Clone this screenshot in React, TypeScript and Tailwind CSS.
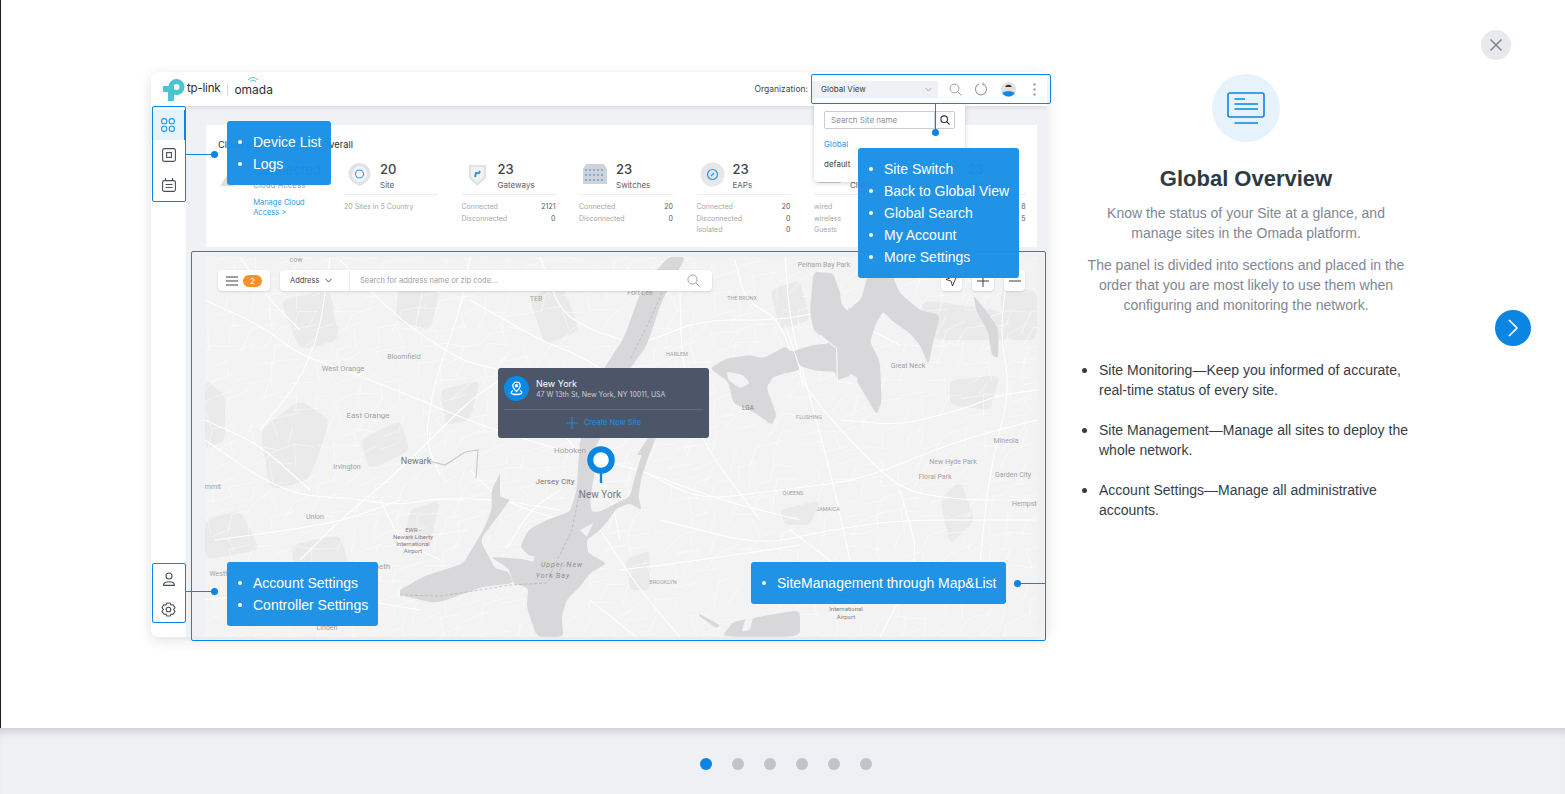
const stats = [
  { num: "20", label: "Site", icon: "site", rows: [["20 Sites in 5 Country", ""]] },
  { num: "23", label: "Gateways", icon: "gateway", rows: [["Connected", "2121"], ["Disconnected", "0"]] },
  { num: "23", label: "Switches", icon: "switch", rows: [["Connected", "20"], ["Disconnected", "0"]] },
  { num: "23", label: "EAPs", icon: "eap", rows: [["Connected", "20"], ["Disconnected", "0"], ["Isolated", "0"]] },
  { num: "23", label: "Clients", icon: "client", rows: [["wired", "20"], ["wireless", "20"], ["Guests", "20"]] },
  { num: "23", label: "Alerts", icon: "alert", rows: [["Error", "8"], ["Warning", "5"]] },
];

const labels: [string, number, number, number, string?][] = [
  ["cow", 296, 262, 7],
  ["TEB", 536, 301, 7],
  ["Fort Lee", 640, 295, 7],
  ["Bloomfield", 404, 359, 7],
  ["West Orange", 343, 371, 7.5],
  ["East Orange", 368, 418, 8],
  ["Irvington", 347, 469, 7],
  ["Newark", 416, 464, 9, "#77777a"],
  ["Union", 315, 519, 7],
  ["mmit", 213, 489, 7],
  ["Westfield", 224, 576, 7],
  ["Elizabeth", 374, 569, 8],
  ["Linden", 327, 630, 7],
  ["EWR -", 413, 532, 6, "#808083"],
  ["Newark Liberty", 413, 539, 6, "#808083"],
  ["International", 413, 546, 6, "#808083"],
  ["Airport", 413, 553, 6, "#808083"],
  ["Jersey City", 555, 484, 8, "#77777a"],
  ["Hoboken", 570, 453, 8],
  ["New York", 600, 498, 10, "#77777a"],
  ["BROOKLYN", 663, 584, 5.5],
  ["QUEENS", 793, 495, 5.5],
  ["JAMAICA", 828, 511, 5.5],
  ["New Hyde Park", 953, 464, 7],
  ["Floral Park", 935, 479, 7],
  ["Garden City", 1013, 477, 7],
  ["Hempstead", 1030, 506, 7],
  ["Great Neck", 908, 368, 7],
  ["FLUSHING", 809, 419, 5.5],
  ["LGA", 748, 410, 6.5, "#808083"],
  ["HARLEM", 677, 356, 5.5],
  ["THE BRONX", 742, 300, 5.5],
  ["Pelham Bay Park", 824, 267, 7],
  ["Mineola", 1006, 443, 7],
  ["Valley Stream", 930, 568, 7],
  ["JFK", 845, 598, 6, "#808083"],
  ["International", 846, 611, 6, "#808083"],
  ["Airport", 846, 619, 6, "#808083"],
];

const highways = [
  "M205 300 L260 325 L300 355 L350 372 L420 400 L480 425 L560 450 L640 470 L720 500 L800 520",
  "M205 420 L260 445 L310 490",
  "M205 440 L260 478 L300 495 L345 498 L400 505 L440 498 L500 500 L560 510",
  "M215 540 L290 530 L345 520 L400 500",
  "M300 560 L340 520 L400 470 L470 400 L500 380",
  "M340 260 L400 320 L460 360 L500 370",
  "M470 300 L540 340 L590 360 L640 400",
  "M470 257 L460 310 L435 380 L425 440 L440 475",
  "M540 257 L560 310 L590 330 L640 345 L700 320 L780 320 L830 310 L900 345",
  "M680 257 L680 300 L682 360 L700 440 L760 520",
  "M735 260 L745 300 L780 320 L800 380 L840 430 L900 490 L960 500 L1037 500",
  "M785 257 L790 320 L805 380 L830 470 L850 560",
  "M840 420 L900 425 L960 410 L1000 395 L1037 390",
  "M640 470 L700 500 L780 490 L860 480 L960 440 L1037 420",
  "M660 520 L760 545 L830 530 L900 520 L1037 520",
  "M600 530 L640 590 L680 637",
  "M620 570 L700 560 L800 545",
  "M530 400 L560 430 L610 490 L620 540",
  "M590 600 L640 640",
  "M790 530 L830 560 L870 600",
  "M470 470 L500 500 L560 520",
  "M240 257 L270 300 L300 330",
  "M500 560 L530 510 L560 490",
  "M330 257 L320 330 L300 380 L260 430",
  "M380 500 L400 540 L440 560",
  "M1010 257 L1000 330 L1010 390 L990 470 L980 560",
  "M900 490 L920 560 L880 637",
  "M205 600 L300 590 L420 610",
];

// rounds the corners of a hand traced line or outline, keeping its shape
function smooth(d: string) {
  const n = (d.match(/-?[\d.]+/g) ?? []).map(Number);
  const pts: number[][] = [];
  for (let i = 0; i < n.length; i += 2) pts.push([n[i], n[i + 1]]);
  const closed = d.trim().endsWith("Z");
  const toward = (a: number[], b: number[], t: number) => [a[0] + (b[0] - a[0]) * t, a[1] + (b[1] - a[1]) * t];
  const t = closed ? 0.2 : 0.4;
  let out = "";
  pts.forEach((p, i) => {
    if (!closed && (i === 0 || i === pts.length - 1)) {
      out += `${i === 0 ? "M" : "L"}${p[0]} ${p[1]}`;
      return;
    }
    const a = toward(p, pts[(i - 1 + pts.length) % pts.length], t);
    const b = toward(p, pts[(i + 1) % pts.length], t);
    out += `${i === 0 ? "M" : "L"}${a[0]} ${a[1]}Q${p[0]} ${p[1]} ${b[0]} ${b[1]}`;
  });
  return closed ? out + "Z" : out;
}

// light street mesh, fixed seed so the picture stays the same
function streetMesh() {
  let seed = 7;
  const rnd = () => {
    seed = (seed * 16807) % 2147483647;
    return seed / 2147483647;
  };
  const out: string[] = [];
  for (let y = 257; y < 640; y += 17) {
    for (let x = 205; x < 1040; x += 21) {
      const a = [x + rnd() * 12, y + rnd() * 10];
      const b = [x + 21 + rnd() * 12, y + rnd() * 10 - 4];
      const c = [x + rnd() * 16 - 6, y + 17 + rnd() * 10];
      if (rnd() > 0.3) out.push(`M${a[0].toFixed(1)} ${a[1].toFixed(1)}L${b[0].toFixed(1)} ${b[1].toFixed(1)}`);
      if (rnd() > 0.4) out.push(`M${a[0].toFixed(1)} ${a[1].toFixed(1)}L${c[0].toFixed(1)} ${c[1].toFixed(1)}`);
    }
  }
  return out.join("");
}

const parks = [
  "M205 380 L225 395 L225 440 L205 450Z",
  "M260 430 L300 400 L330 420 L310 480 L270 490Z",
  "M280 300 L330 290 L340 340 L300 350Z",
  "M360 440 L400 420 L410 450 L370 470Z",
  "M400 280 L440 290 L430 330 L395 320Z",
  "M205 520 L240 510 L260 550 L205 560Z",
  "M290 545 L340 535 L350 570 L300 590Z",
  "M530 300 L560 280 L580 330 L545 345Z",
  "M440 390 L480 380 L470 420 L445 425Z",
  "M770 290 L800 280 L810 320 L780 330Z",
  "M920 300 L1000 310 L1010 340 L930 340Z",
  "M1000 290 L1037 290 L1037 340 L1005 340Z",
  "M950 380 L1000 375 L990 410 L950 405Z",
  "M625 560 L650 550 L650 590 L630 590Z",
  "M780 510 L820 500 L810 525 L785 525Z",
  "M940 500 L960 480 L975 520 L950 545Z",
  "M410 510 L440 500 L430 545 L405 540Z",
];

const waterNorth = [
  "M640 50 L700 55 L715 100 L745 165 L785 130 L800 70 L840 0 L900 0 L880 70 L900 115 L960 165 L1020 180 L1000 260 L985 330 L960 270 L930 235 L880 200 L850 170 L830 200 L810 260 L840 320 L845 440 L830 480 L760 360 L712 375 L705 350 L650 348 L605 335 L590 320 L600 345 L520 365 L500 400 L530 480 L515 510 L460 470 L400 445 L385 380 L330 340 L380 310 L450 300 L490 310 L555 275 L575 290 L640 270 L690 265 L640 225 L630 170Z",
  "M1120 120 L1160 170 L1195 220 L1195 310 L1175 300 L1165 230 L1130 170Z",
  "M130 600 L200 510 L170 510 L110 600Z",
];

const waterSouth = [
  "M540 0 L590 0 L585 90 L570 180 L575 215 L600 215 L640 195 L690 170 L705 110 L730 30 L745 0 L765 0 L745 50 L725 110 L715 170 L725 210 L690 190 L650 205 L625 240 L600 270 L560 300 L565 340 L620 370 L570 400 L540 440 L500 480 L485 530 L490 590 L410 590 L380 500 L385 445 L340 430 L325 385 L270 350 L400 360 L360 320 L385 270 L440 240 L510 215 L530 150 L535 70Z",
  "M300 100 L275 150 L275 210 L250 270 L190 370 L130 390 L70 410 L0 450 L0 465 L110 490 L250 440 L340 430 L325 395 L285 385 L240 300 L300 220 L330 180 L300 170 L300 130Z",
  "M1200 510 L1080 530 L1000 545 L965 590 L1200 590Z",
  "M895 520 L960 555 L950 565 L900 530Z",
];

function MapArt() {
  return (
    <svg className="absolute inset-0 h-full w-full" viewBox="205 257 832 380" preserveAspectRatio="none">
      <rect x="205" y="257" width="832" height="380" fill="#f3f3f4" />
      <g fill="#eaeaeb">
        {parks.map((d) => (
          <path key={d} d={smooth(d)} />
        ))}
      </g>
      <path d={streetMesh()} stroke="#ffffff" strokeWidth=".5" fill="none" opacity=".9" />
      <g fill="none" stroke="#ffffff" strokeWidth="1.1" strokeLinejoin="round">
        {highways.map((d) => (
          <path key={d} d={smooth(d)} />
        ))}
      </g>
      {/* water goes over the streets */}
      <g fill="#d8d8da">
        <path d={smooth("M668 257 L686 257 L662 300 L647 345 L628 372 L604 430 L597 445 L580 445 L584 420 L604 368 L624 338 L642 288Z")} />
        <g transform="translate(600 255) scale(.3333)">
          {waterNorth.map((d) => (
            <path key={d} d={smooth(d)} />
          ))}
        </g>
        <g transform="translate(400 440) scale(.3333)">
          {waterSouth.map((d) => (
            <path key={d} d={smooth(d)} />
          ))}
        </g>
      </g>
      {/* islands and piers */}
      <g fill="#f3f3f4">
        <g transform="translate(600 255) scale(.3333)">
          <path d={smooth("M380 350 L430 360 L450 385 L420 400 L385 375Z")} />
          <path d={smooth("M500 390 L560 350 L560 400 L520 430Z")} />
          <path d={smooth("M715 80 L745 140 L745 170 L725 150Z")} />
          <path d={smooth("M750 355 L775 370 L765 385 L748 370Z")} />
          <path d="M555 210 L600 340 L610 400M660 240 L710 280 L712 380 L760 385" fill="none" stroke="#ffffff" strokeWidth="3" />
        </g>
        <g transform="translate(400 440) scale(.3333)">
          <path d="M280 335 L400 365 L405 350 L300 320Z" />
          <path d="M540 270 L580 250 L560 290Z" />
          <path d={smooth("M560 300 L610 300 L620 355 L565 340Z")} />
          <path d={smooth("M1035 540 L1060 530 L1050 570 L1025 575Z")} />
        </g>
      </g>
      {/* rivers and state line */}
      <g fill="none">
        <path d="M425 460 L445 465 L465 452 L478 450 L476 478" stroke="#c9c9cb" strokeWidth="1.2" />
        <path d="M400 595 L440 596 L480 590 L510 585 L546 583 L570 560" stroke="#a9a9ab" strokeWidth=".6" strokeDasharray="3 2" />
        <path d="M580 490 L572 530 L550 575" stroke="#a9a9ab" strokeWidth=".6" strokeDasharray="3 2" />
        <path d="M672 270 L650 320 L630 360" stroke="#a9a9ab" strokeWidth=".6" strokeDasharray="3 2" />
      </g>
      <g fontFamily="Roboto, sans-serif" textAnchor="middle">
        {labels.map(([t, x, y, s, c]) => (
          <text key={t + x} x={x} y={y} fontSize={s} fill={c ?? "#a2a2a4"}>
            {t}
          </text>
        ))}
        <text x="562" y="567" fontSize="7" fill="#8c8c90" fontStyle="italic" letterSpacing="1">
          Upper New
        </text>
        <text x="553" y="578" fontSize="7" fill="#8c8c90" fontStyle="italic" letterSpacing="1">
          York Bay
        </text>
      </g>
    </svg>
  );
}

function StatIcon({ kind }: { kind: string }) {
  if (kind === "gateway") {
    return (
      <svg width="25" height="25" viewBox="0 0 25 25">
        <path d="M4 3 L21 3 L21 16 L12.5 24 L4 16Z" fill="#dfe1e4" />
        <path d="M6 5 L19 5 L19 15 L12.5 21 L6 15Z" fill="#f1f2f4" />
        <path d="M10 15 L11 11 L14 11 L15 9" stroke="#2f9be6" strokeWidth="2" fill="none" />
      </svg>
    );
  }
  if (kind === "switch") {
    return (
      <svg width="26" height="25" viewBox="0 0 26 25">
        <path d="M4 2 L22 2 L25 7 L25 22 L1 22 L1 7Z" fill="#cfd2d7" />
        {[8, 13, 18].map((y) => (
          <path key={y} d={`M3 ${y} H23`} stroke="#5aa9e3" strokeWidth="1.4" strokeDasharray="2 2" />
        ))}
      </svg>
    );
  }
  if (kind === "client") {
    return (
      <svg width="25" height="25" viewBox="0 0 25 25">
        <rect x="1" y="12" width="23" height="9" rx="1" fill="#cfd2d7" />
      </svg>
    );
  }
  if (kind === "alert") {
    return (
      <svg width="25" height="25" viewBox="0 0 25 25">
        <rect x="2" y="4" width="21" height="15" rx="1" fill="#dfe1e4" />
      </svg>
    );
  }
  if (kind === "eap") {
    return (
      <svg width="25" height="25" viewBox="0 0 25 25">
        <circle cx="12.5" cy="12.5" r="12" fill="#e6e7ea" />
        <circle cx="12.5" cy="12.5" r="5" fill="none" stroke="#2f9be6" strokeWidth="1.2" />
        <path d="M11 14 L14 11" stroke="#2f9be6" strokeWidth="1.2" />
      </svg>
    );
  }
  return (
    <svg width="25" height="25" viewBox="0 0 25 25">
      <path d="M12.5 1 A11 11 0 0 1 23.5 12 C23.5 18 17 22 12.5 24 C8 22 1.5 18 1.5 12 A11 11 0 0 1 12.5 1Z" fill="#e2e3e6" />
      <circle cx="12.5" cy="12" r="7.5" fill="#f6f6f7" />
      <circle cx="12.5" cy="12" r="4" fill="none" stroke="#2f9be6" strokeWidth="1.1" />
    </svg>
  );
}

function StatsCard() {
  return (
    <div className="ml-[20px] h-[122px] bg-white pl-[12px] pt-[14px]">
      <p className="text-[9.3px] leading-[11px] text-[#2d2d2d]">Cloud Based Controller Overall</p>
      <div className="mt-[12px] flex gap-[23.5px]">
        <div className="w-[102.5px]">
          <div className="flex gap-[13px]">
            <svg width="24" height="24" viewBox="0 0 24 24" className="mt-[3px]">
              <path d="M2 22 L10 10 L18 22Z" fill="#dcdee1" />
            </svg>
            <div className="pt-[1px]">
              <p className="text-[13px] leading-[15px] text-[#4a4a4a]">Connected</p>
              <p className="mt-[2px] text-[8px] leading-[11px] text-[#9a9fa6]">Cloud Access</p>
              <p className="mt-[7px] text-[7.5px] leading-[10px] text-[#2f9be6]">
                Manage Cloud
                <br />
                Access &gt;
              </p>
            </div>
          </div>
        </div>
        {stats.map((s) => (
          <div key={s.label} className="w-[94px]">
            <div className="flex h-[33px] gap-[8px] border-b border-[#eceef0] pl-[3px]">
              <StatIcon kind={s.icon} />
              <div>
                <p className="text-[13px] leading-[14px] font-medium text-[#3f4448]">{s.num}</p>
                <p className="mt-[4px] text-[8px] leading-[10px] text-[#5c6268]">{s.label}</p>
              </div>
            </div>
            <div className="mt-[7px] flex flex-col gap-[1.5px]">
              {s.rows.map(([k, v]) => (
                <div key={k} className="flex justify-between text-[7px] leading-[10px] text-[#a3a7ad]">
                  <span>{k}</span>
                  <span className="text-[#55595e]">{v}</span>
                </div>
              ))}
            </div>
          </div>
        ))}
      </div>
    </div>
  );
}

function MapPanel() {
  return (
    <div className="relative mt-[10px] ml-[19px] flex-1 overflow-hidden">
      <MapArt />
      <div className="relative flex items-start pt-[13px] pl-[13px]">
        <div className="flex h-[21px] w-[52px] items-center gap-[5px] rounded-sm bg-white pl-[8px] shadow-sm">
          <svg width="12" height="10" viewBox="0 0 12 10" stroke="#3c4248" strokeWidth="1">
            <path d="M0 1H12M0 5H12M0 9H12" />
          </svg>
          <span className="flex h-[12px] w-[19px] items-center justify-center rounded-full bg-[#f7902a] text-[8px] text-white">2</span>
        </div>
        <div className="ml-[10px] flex h-[21px] w-[432px] items-center rounded-sm bg-white shadow-sm">
          <div className="flex h-full w-[70px] items-center gap-[6px] border-r border-[#f0f1f3] pl-[10px] text-[7.5px] text-[#3c4248]">
            Address
            <svg width="7" height="5" viewBox="0 0 7 5" fill="none" stroke="#3c4248" strokeWidth=".9">
              <path d="M.5 .8 L3.5 4 L6.5 .8" />
            </svg>
          </div>
          <span className="ml-[10px] flex-1 text-[7.5px] text-[#9a9fa6]">Search for address name or zip code...</span>
          <svg width="13" height="13" viewBox="0 0 13 13" fill="none" stroke="#9aa0a6" strokeWidth="1" className="mr-[12px]">
            <circle cx="5.5" cy="5.5" r="4.6" />
            <path d="M9 9 L12.5 12.5" />
          </svg>
        </div>
        <div className="ml-[229px] flex gap-[10px]">
          <div className="flex h-[21px] w-[21px] items-center justify-center rounded-sm bg-white shadow-sm">
            <svg width="13" height="13" viewBox="0 0 13 13" fill="none" stroke="#3c4248" strokeWidth="1">
              <path d="M12 1 L1 5.5 L6 7 L7.5 12Z" />
            </svg>
          </div>
          <div className="flex h-[21px] w-[22px] items-center justify-center rounded-sm bg-white shadow-sm">
            <svg width="12" height="12" viewBox="0 0 12 12" stroke="#3c4248" strokeWidth="1">
              <path d="M0 6H12M6 0V12" />
            </svg>
          </div>
          <div className="flex h-[21px] w-[21px] items-center justify-center rounded-sm bg-white shadow-sm">
            <svg width="12" height="12" viewBox="0 0 12 12" stroke="#3c4248" strokeWidth="1">
              <path d="M0 6H12" />
            </svg>
          </div>
        </div>
      </div>

      {/* site popup and pin */}
      <div className="absolute top-[111px] left-[293px] h-[70px] w-[211px] rounded-[3px] bg-[#4d5669] text-white">
        <div className="mx-[6px] flex h-[42px] items-center gap-[7px] border-b border-[#636b7c]">
          <span className="flex h-[25px] w-[25px] items-center justify-center rounded-full bg-[#0a8ae6]">
            <svg width="15" height="15" viewBox="0 0 15 15" fill="none" stroke="#ffffff" strokeWidth="1.3">
              <path d="M7.5 1.2 C5 1.2 3.8 3 3.8 4.8 C3.8 7 6 9 7.5 10.5 C9 9 11.2 7 11.2 4.8 C11.2 3 10 1.2 7.5 1.2Z" />
              <circle cx="7.5" cy="4.8" r="1.1" fill="#ffffff" />
              <path d="M4 9.5 C1 11 1.5 13.5 7.5 13.5 C13.5 13.5 14 11 11 9.5" />
            </svg>
          </span>
          <div>
            <p className="text-[9px] leading-[12px]">New York</p>
            <p className="text-[7px] leading-[10px] text-[#ccd0d6]">47 W 13th St, New York, NY 10011, USA</p>
          </div>
        </div>
        <div className="flex h-[26px] items-center justify-center gap-[6px] text-[7.5px] text-[#1a90e0]">
          <svg width="12" height="12" viewBox="0 0 12 12" stroke="#1a90e0" strokeWidth="1">
            <path d="M0 6H12M6 0V12" />
          </svg>
          Create New Site
        </div>
      </div>
      <svg className="absolute top-[189px] left-[382px]" width="28" height="38" viewBox="0 0 28 38">
        <path d="M14 26 V37" stroke="#0a86e2" strokeWidth="2.4" />
        <circle cx="14" cy="14" r="10.8" fill="#ffffff" stroke="#0a86e2" strokeWidth="6" />
      </svg>
    </div>
  );
}

function Header() {
  return (
    <div className="relative z-10 flex h-[34px] shrink-0 items-center rounded-t-lg bg-white pl-[12px] shadow-[0_2px_4px_rgba(0,0,0,0.08)]">
      <svg width="22" height="22" viewBox="0 0 22 22" fill="none" className="mt-[1px]">
        <circle cx="13.5" cy="8" r="5.5" stroke="#4bc4d2" strokeWidth="5" />
        <path d="M11 7 H0 V13 H5 V22 H11Z" fill="#4bc4d2" />
      </svg>
      <span className="ml-[2px] text-[11.5px] leading-none tracking-[-0.2px] text-[#2b2f33]">tp-link</span>
      <span className="ml-[7px] h-[13px] w-px bg-[#d9dbde]" />
      <div className="relative mb-[2px] ml-[6px] leading-none">
        <span className="text-[12px] leading-none text-[#2b2f33]">omada</span>
        <svg className="absolute -top-[4px] left-[13px]" width="12" height="7" viewBox="0 0 12 7" fill="none" stroke="#4bc4d2" strokeWidth="1">
          <path d="M1 4 C4 .8 8 .8 11 4M3 5.5 C5 3.8 7 3.8 9 5.5" />
        </svg>
      </div>
      <div className="ml-auto flex items-center pr-[11.5px]">
        <span className="text-[8.5px] text-[#43484e]">Organization:</span>
        <div className="ml-[4px] flex h-[17px] w-[126px] items-center justify-between bg-[#f0f1f4] px-[9px] pr-[6px] text-[8px] text-[#3c4248]">
          Global View
          <svg width="7" height="5" viewBox="0 0 7 5" fill="none" stroke="#9aa0a6" strokeWidth=".9">
            <path d="M.5 .8 L3.5 4 L6.5 .8" />
          </svg>
        </div>
        <svg width="13" height="13" viewBox="0 0 13 13" fill="none" stroke="#9aa0a6" strokeWidth="1" className="ml-[10.5px]">
          <circle cx="5.5" cy="5.5" r="4.4" />
          <path d="M8.8 8.8 L12.5 12.5" />
        </svg>
        <svg width="14" height="14" viewBox="0 0 14 14" fill="none" stroke="#9aa0a6" strokeWidth="1.1" className="ml-[12.5px]">
          <path d="M9 2 A5.6 5.6 0 1 1 5 2M9 .5 V3.5" />
        </svg>
        <svg width="15" height="15" viewBox="0 0 15 15" className="ml-[12.5px]">
          <circle cx="7.5" cy="7.5" r="7.5" fill="#dfe3e7" />
          <path d="M1.2 11 C3 8.8 12 8.8 13.8 11 A7.5 7.5 0 0 1 1.2 11Z" fill="#0d8ae4" />
          <circle cx="7.5" cy="5.6" r="3.1" fill="#f4d7c4" />
          <path d="M4.4 5 C4.6 2 10.4 2 10.6 5Z" fill="#2d3136" />
        </svg>
        <svg width="3" height="13" viewBox="0 0 3 13" fill="#9aa0a6" className="ml-[17px]">
          <circle cx="1.5" cy="1.5" r="1.2" />
          <circle cx="1.5" cy="6.5" r="1.2" />
          <circle cx="1.5" cy="11.5" r="1.2" />
        </svg>
      </div>
    </div>
  );
}

function Sidebar() {
  return (
    <div className="flex w-[35px] shrink-0 flex-col justify-between bg-white pt-[4px] pb-[13px]">
      <div>
        <div className="flex h-[30px] items-center justify-center border-r-2 border-[#0a86e2] bg-[#e6f3fc]">
          <svg width="14" height="14" viewBox="0 0 14 14" fill="none" stroke="#1f93e6" strokeWidth="1.1">
            <rect x=".6" y=".6" width="5.2" height="5.2" rx="2.4" />
            <rect x="8.2" y=".6" width="5.2" height="5.2" rx="2.4" />
            <rect x=".6" y="8.2" width="5.2" height="5.2" rx="2.4" />
            <rect x="8.2" y="8.2" width="5.2" height="5.2" rx="2.4" />
          </svg>
        </div>
        <div className="flex h-[30px] items-center justify-center">
          <svg width="14" height="14" viewBox="0 0 14 14" fill="none" stroke="#4a5058" strokeWidth="1.1">
            <rect x=".6" y=".6" width="12.8" height="12.8" rx="1.6" />
            <rect x="4.6" y="4.6" width="4.8" height="4.8" />
          </svg>
        </div>
        <div className="flex h-[30px] items-center justify-center">
          <svg width="14" height="14" viewBox="0 0 14 14" fill="none" stroke="#4a5058" strokeWidth="1.1">
            <rect x=".6" y="2.6" width="12.8" height="10.8" rx="1.6" />
            <path d="M3.5 0V3M10.5 0V3M3.5 6.5H10.5M3.5 9.5H10.5" />
          </svg>
        </div>
      </div>
      <div>
        <div className="flex h-[30px] items-center justify-center">
          <svg width="14" height="14" viewBox="0 0 14 14" fill="none" stroke="#4a5058" strokeWidth="1.1">
            <circle cx="7" cy="4" r="3" />
            <path d="M1.5 13.4 C1.5 8.6 12.5 8.6 12.5 13.4Z" />
          </svg>
        </div>
        <div className="flex h-[30px] items-center justify-center">
          <svg width="15" height="15" viewBox="0 0 15 15" fill="none" stroke="#4a5058" strokeWidth="1.1">
            <path d="M5.8 1 H9.2 L10 3 L12.2 2.8 L14 5.6 L12.6 7.5 L14 9.4 L12.2 12.2 L10 12 L9.2 14 H5.8 L5 12 L2.8 12.2 L1 9.4 L2.4 7.5 L1 5.6 L2.8 2.8 L5 3Z" strokeLinejoin="round" />
            <circle cx="7.5" cy="7.5" r="2.3" />
          </svg>
        </div>
      </div>
    </div>
  );
}

function SiteDropdown() {
  return (
    <div className="absolute top-[32px] left-[663px] z-20 h-[78px] w-[151px] rounded-b-sm bg-white px-[10px] pt-[7px] shadow-[0_1px_5px_rgba(0,0,0,0.18)]">
      <div className="flex h-[18px] items-center rounded-[2px] border border-[#c9ccd1] text-[8px] text-[#8d9298]">
        <span className="flex-1 pl-[6px]">Search Site name</span>
        <span className="flex h-full w-[20px] items-center justify-center border-l border-[#c9ccd1]">
          <svg width="10" height="10" viewBox="0 0 10 10" fill="none" stroke="#30353b" strokeWidth="1.1">
            <circle cx="4.2" cy="4.2" r="3.3" />
            <path d="M6.7 6.7 L9.6 9.6" />
          </svg>
        </span>
      </div>
      <p className="mt-[10px] text-[8px] leading-[10px] text-[#2f9be6]">Global</p>
      <p className="mt-[10px] text-[8px] leading-[10px] text-[#3c4248]">default</p>
    </div>
  );
}

function Callout({ items, className }: { items: string[]; className: string }) {
  return (
    <ul
      className={`absolute z-30 rounded-[3px] bg-[#1a90e6]/[.97] py-[10px] pr-[10px] pl-[11px] font-['Liberation_Sans',Arial,sans-serif] text-[14px] leading-[22px] text-white ${className}`}
    >
      {items.map((t) => (
        <li key={t} className="flex items-center gap-[11px] whitespace-nowrap">
          <span className="h-[4px] w-[4px] shrink-0 rounded-full bg-white" />
          {t}
        </li>
      ))}
    </ul>
  );
}

function Illustration() {
  return (
    <div className="relative h-[565px] w-[896px] shrink-0 font-['Inter',sans-serif]">
      <div className="flex h-full flex-col overflow-hidden rounded-lg bg-white shadow-[0_3px_14px_rgba(0,0,0,0.13)]">
        <Header />
        <div className="flex min-h-0 flex-1">
          <Sidebar />
          <div className="flex min-w-0 flex-1 flex-col bg-[#f0f1f4] pt-[19px] pr-[10px]">
            <StatsCard />
            <MapPanel />
          </div>
        </div>
      </div>
      <SiteDropdown />

      {/* highlight frames */}
      <div className="pointer-events-none absolute top-[2px] left-[660px] z-30 h-[30px] w-[240px] rounded-[2px] border border-[#0a86e2]" />
      <div className="pointer-events-none absolute top-[34px] left-[1px] z-30 h-[96px] w-[34px] rounded-[2px] border border-[#0a86e2]" />
      <div className="pointer-events-none absolute top-[491px] left-[1px] z-30 h-[60px] w-[34px] rounded-[2px] border border-[#0a86e2]" />
      <div className="pointer-events-none absolute top-[179px] left-[40px] z-30 h-[390px] w-[855px] rounded-[2px] border border-[#0a86e2]" />

      {/* leader lines */}
      <div className="absolute top-[82px] left-[35px] z-30 h-px w-[28px] bg-[#0a86e2]" />
      <div className="absolute top-[79px] left-[60px] z-30 h-[7px] w-[7px] rounded-full bg-[#0a86e2]" />
      <div className="absolute top-[519px] left-[35px] z-30 h-px w-[26px] bg-[#0a86e2]" />
      <div className="absolute top-[516px] left-[60px] z-30 h-[7px] w-[7px] rounded-full bg-[#0a86e2]" />
      <div className="absolute top-[511px] left-[866px] z-30 h-px w-[29px] bg-[#0a86e2]" />
      <div className="absolute top-[508px] left-[863px] z-30 h-[7px] w-[7px] rounded-full bg-[#0a86e2]" />
      <div className="absolute top-[32px] left-[784px] z-30 h-[28px] w-px bg-[#0a86e2]" />
      <div className="absolute top-[57px] left-[781px] z-30 h-[7px] w-[7px] rounded-full bg-[#0a86e2]" />

      <Callout items={["Device List", "Logs"]} className="top-[49px] left-[76px] h-[64px] w-[104px]" />
      <Callout items={["Account Settings", "Controller Settings"]} className="top-[490px] left-[76px] h-[64px] w-[151px]" />
      <Callout
        items={["Site Switch", "Back to Global View", "Global Search", "My Account", "More Settings"]}
        className="top-[76px] left-[707px] h-[130px] w-[161px]"
      />
      <Callout items={["SiteManagement through Map&List"]} className="top-[490px] left-[600px] h-[42px] w-[255px]" />
    </div>
  );
}

function Bullet({ children }: { children: string }) {
  return (
    <li className="flex">
      <span className="mt-[7.5px] mr-[12px] h-[5px] w-[5px] shrink-0 rounded-full bg-[#333e48]" />
      <span>{children}</span>
    </li>
  );
}

export default function App() {
  return (
    <div className="flex h-[794px] w-[1565px] flex-col overflow-hidden bg-white font-['Liberation_Sans',Arial,sans-serif]">
      <div className="relative flex h-[728px] shrink-0 items-start border-l border-[#1c1c1c] pt-[72px] pl-[150px]">
        <Illustration />
        <div className="mt-[2px] ml-[34px] flex w-[330px] flex-col items-center">
          <div className="flex h-[68px] w-[68px] items-center justify-center rounded-full bg-[#e6f3fc]">
            <svg width="38" height="32" viewBox="0 0 38 32" fill="none" stroke="#0a86e2" strokeWidth="1.4">
              <rect x="1" y="1" width="36" height="24" rx="2" strokeWidth="1.6" />
              <path d="M7.5 7H18M7.5 12H31M7.5 17H31M7.5 31H31" />
            </svg>
          </div>
          <h1 className="mt-[22px] text-[22px] leading-[30px] font-bold text-[#2c3a42]">Global Overview</h1>
          <p className="mt-[9px] text-center text-[14px] leading-[20px] text-[#7f8794]">
            Know the status of your Site at a glance, and
            <br />
            manage sites in the Omada platform.
          </p>
          <p className="mt-[12px] text-center text-[14px] leading-[20px] text-[#7f8794]">
            The panel is divided into sections and placed in the
            <br />
            order that you are most likely to use them when
            <br />
            configuring and monitoring the network.
          </p>
          <ul className="mt-[45px] flex w-full flex-col gap-[20px] pl-[1px] text-[14px] leading-[20px] text-[#333e48]">
            <Bullet>Site Monitoring—Keep you informed of accurate, real-time status of every site.</Bullet>
            <Bullet>Site Management—Manage all sites to deploy the whole network.</Bullet>
            <Bullet>Account Settings—Manage all administrative accounts.</Bullet>
          </ul>
        </div>

        <button className="absolute top-[30px] left-[1480px] flex h-[30px] w-[30px] items-center justify-center rounded-full bg-[#e8e9ed]">
          <svg width="12" height="12" viewBox="0 0 12 12" stroke="#7d838c" strokeWidth="1.5">
            <path d="M.5 .5 L11.5 11.5M11.5 .5 L.5 11.5" />
          </svg>
        </button>
        <button className="absolute top-[310px] left-[1494px] flex h-[36px] w-[36px] items-center justify-center rounded-full bg-[#0a86e2]">
          <svg width="10" height="18" viewBox="0 0 10 18" fill="none" stroke="#ffffff" strokeWidth="1.6">
            <path d="M1 1 L9 9 L1 17" />
          </svg>
        </button>
      </div>
      <div className="flex flex-1 items-center justify-center gap-[20px] bg-[#eef0f3] pt-[6px] pl-[6px] shadow-[inset_0_10px_8px_-6px_rgba(0,0,0,0.14)]">
        <span className="h-[12px] w-[12px] rounded-full bg-[#0a86e2]" />
        <span className="h-[12px] w-[12px] rounded-full bg-[#bec4cc]" />
        <span className="h-[12px] w-[12px] rounded-full bg-[#bec4cc]" />
        <span className="h-[12px] w-[12px] rounded-full bg-[#bec4cc]" />
        <span className="h-[12px] w-[12px] rounded-full bg-[#bec4cc]" />
        <span className="h-[12px] w-[12px] rounded-full bg-[#bec4cc]" />
      </div>
    </div>
  );
}
